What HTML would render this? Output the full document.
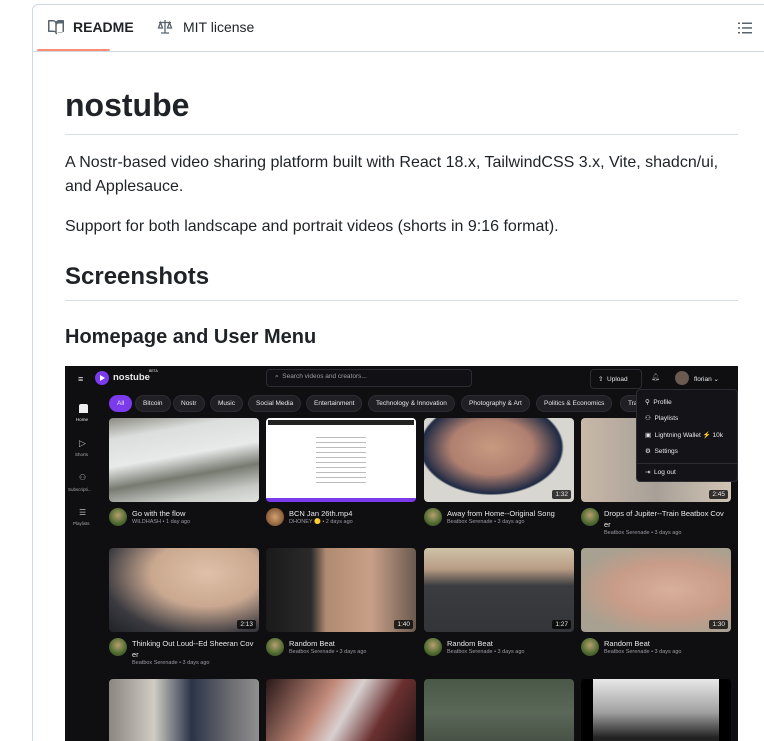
<!DOCTYPE html>
<html style="width:764px;height:741px;overflow:hidden"><head><meta charset="utf-8"><style>
*{margin:0;padding:0;box-sizing:border-box}
body{width:764px;height:741px;overflow:hidden;background:#fff;font-family:"Liberation Sans",sans-serif;color:#1f2328;position:relative}
.a{position:absolute}
.box{left:32px;top:4px;width:740px;height:742px;border:1px solid #d1d9e0;border-radius:6px}
.t{white-space:nowrap}
.ss{left:65px;top:366px;width:673px;height:375px;background:#0f0f12;overflow:hidden}
.ss *{color:#e8e8ea}
.pill{position:absolute;top:29px;height:17px;border-radius:9px;background:#1f1f24;border:1px solid #2c2c33;font-size:6.5px;line-height:15px;padding:0 7px;white-space:nowrap}
.th{position:absolute;width:150px;height:84px;border-radius:4px;overflow:hidden}
.av{position:absolute;width:18px;height:18px;border-radius:50%;background:radial-gradient(circle at 50% 40%,#b8a070,#4d6a30 60%,#2a3a20)}
.ti{position:absolute;font-size:7.5px;white-space:nowrap}
.me{position:absolute;font-size:5.5px;color:#9a9aa2 !important;white-space:nowrap}
.du{position:absolute;right:3px;bottom:3px;background:rgba(0,0,0,.75);font-size:6.5px;padding:1px 3px;border-radius:2px}
.mi{position:absolute;left:8px;font-size:6.5px;white-space:nowrap}
</style></head><body>
<div class="a box"></div>
<svg class="a" style="left:48px;top:19px" width="16" height="16" viewBox="0 0 16 16"><path fill="#59636e" d="M0 1.75A.75.75 0 0 1 .75 1h4.25c1.2 0 2.3.6 3 1.5.7-.9 1.8-1.5 3-1.5h4.25a.75.75 0 0 1 .75.75v10.5a.75.75 0 0 1-.75.75h-4.5c-.9 0-1.7.7-1.7 1.6 0 .4-.3.65-.75.65s-.75-.25-.75-.65c0-.9-.8-1.6-1.7-1.6H.75A.75.75 0 0 1 0 12.250Zm7.25 2.5c0-1-.8-1.750-1.75-1.75H1.5v9h3.75c.75 0 1.450.2 2 .6Zm1.5 9.850c.55-.4 1.250-.6 2-.6h3.750v-9H10.5c-1 0-1.75.8-1.75 1.75Z"/></svg>
<div class="a t" style="left:73px;top:19px;font-size:14px;font-weight:bold">README</div>
<div class="a" style="left:37px;top:49px;width:73px;height:2px;background:#fd8c73;border-radius:1px"></div>
<svg class="a" style="left:157px;top:19px" width="16" height="16" viewBox="0 0 16 16"><path fill="none" stroke="#59636e" stroke-width="1.3" d="M8 1v13M4 14h8M2 3.5h12M3.5 3.5 1.5 9h4zM12.5 3.5 10.5 9h4z"/></svg>
<div class="a t" style="left:183px;top:19px;font-size:14px;color:#1f2328">MIT license</div>
<svg class="a" style="left:737px;top:20px" width="16" height="16" viewBox="0 0 16 16"><g fill="#59636e"><rect x="1" y="2.5" width="2" height="1.5"/><rect x="1" y="7.2" width="2" height="1.5"/><rect x="1" y="12" width="2" height="1.5"/><rect x="5" y="2.5" width="10" height="1.5"/><rect x="5" y="7.2" width="10" height="1.5"/><rect x="5" y="12" width="10" height="1.5"/></g></svg>
<div class="a" style="left:33px;top:51px;width:731px;height:1px;background:#d1d9e0"></div>
<div class="a t" style="left:65px;top:85px;font-size:32px;font-weight:bold;line-height:40px">nostube</div>
<div class="a" style="left:65px;top:134px;width:673px;height:1px;background:#d8dee4"></div>
<div class="a" style="left:65px;top:151px;width:680px;font-size:16px;line-height:24px">A Nostr-based video sharing platform built with React 18.x, TailwindCSS 3.x, Vite, shadcn/ui, and Applesauce.</div>
<div class="a t" style="left:65px;top:215px;font-size:16px;line-height:24px">Support for both landscape and portrait videos (shorts in 9:16 format).</div>
<div class="a t" style="left:65px;top:262px;font-size:24px;font-weight:bold;line-height:30px">Screenshots</div>
<div class="a" style="left:65px;top:300px;width:673px;height:1px;background:#d8dee4"></div>
<div class="a t" style="left:65px;top:325px;font-size:20px;font-weight:bold;line-height:25px">Homepage and User Menu</div>
<div class="a ss">
 <div class="a" style="left:13px;top:8px;font-size:9px">≡</div>
 <div class="a" style="left:30px;top:5px;width:14px;height:14px;border-radius:50%;background:#7c3aed"></div>
 <div class="a" style="left:35px;top:9px;width:0;height:0;border-left:5px solid #fff;border-top:3px solid transparent;border-bottom:3px solid transparent"></div>
 <div class="a t" style="left:48px;top:6px;font-size:9.5px;font-weight:bold">nostube</div>
 <div class="a t" style="left:84px;top:3px;font-size:3.5px">BETA</div>
 <div class="a" style="left:201px;top:3px;width:206px;height:18px;border:1px solid #2c2c33;border-radius:4px;background:#111115"></div>
 <div class="a t" style="left:210px;top:7px;font-size:6.5px;color:#9a9aa2 !important">⌕ &nbsp;Search videos and creators...</div>
 <div class="a" style="left:525px;top:3px;width:52px;height:20px;border:1px solid #2c2c33;border-radius:4px"></div>
 <div class="a t" style="left:533px;top:9px;font-size:6.5px">⇧ &nbsp;Upload</div>
 <div class="a t" style="left:586px;top:7px;font-size:7px;color:#999 !important">🔔︎</div>
 <div class="a" style="left:610px;top:5px;width:14px;height:14px;border-radius:50%;background:#6a5a50"></div>
 <div class="a t" style="left:629px;top:9px;font-size:6.5px">florian ⌄</div>
 <div class="pill" style="left:44px;background:#7c3aed;border-color:#7c3aed">All</div>
 <div class="pill" style="left:70px">Bitcoin</div>
 <div class="pill" style="left:108px">Nostr</div>
 <div class="pill" style="left:145px">Music</div>
 <div class="pill" style="left:183px">Social Media</div>
 <div class="pill" style="left:241px">Entertainment</div>
 <div class="pill" style="left:303px">Technology &amp; Innovation</div>
 <div class="pill" style="left:396px">Photography &amp; Art</div>
 <div class="pill" style="left:471px">Politics &amp; Economics</div>
 <div class="pill" style="left:555px">Tra</div>
 <div class="a" style="left:14px;top:38px;width:9px;height:9px;background:#eee;border-radius:2px 2px 0 0"></div>
 <div class="a t" style="left:11px;top:51px;font-size:4.5px">Home</div>
 <div class="a t" style="left:14px;top:72px;font-size:9px;color:#bbb !important">▷</div>
 <div class="a t" style="left:10px;top:86px;font-size:4.5px;color:#aaa !important">Shorts</div>
 <div class="a t" style="left:14px;top:107px;font-size:8px;color:#bbb !important">⚇</div>
 <div class="a t" style="left:3px;top:121px;font-size:4.5px;color:#aaa !important">Subscripti...</div>
 <div class="a t" style="left:14px;top:142px;font-size:8px;color:#bbb !important">☰</div>
 <div class="a t" style="left:8px;top:155px;font-size:4.5px;color:#aaa !important">Playlists</div>
 <div class="th" style="left:44px;top:52px;background:linear-gradient(170deg,#8a8a80 0%,#dcdedd 20%,#e8eaea 45%,#777a70 65%,#c8cac6 85%,#e0e2e0 100%)"></div>
 <div class="th" style="left:201px;top:52px;background:#fff;border-bottom:4px solid #7c3aed"><div style="margin:2px;height:5px;background:#222"></div><div style="margin:8px 50px;height:50px;background:repeating-linear-gradient(#fff 0 4px,#bbb 4px 5px)"></div></div>
 <div class="th" style="left:359px;top:52px;background:radial-gradient(ellipse at 45% 35%,#c89a80 0%,#b08070 35%,#1e2a44 60%,#d8d6d0 62%)"><div class="du">1:32</div></div>
 <div class="th" style="left:516px;top:52px;background:linear-gradient(90deg,#c8b8a8,#a8a098 50%,#d0c4b4)"><div class="du">2:45</div></div>
 <div class="av" style="left:44px;top:142px"></div><div class="ti" style="left:67px;top:143px">Go with the flow</div><div class="me" style="left:67px;top:153px">WILDHASH • 1 day ago</div>
 <div class="av" style="left:201px;top:142px;background:radial-gradient(#d0a070,#6a4020)"></div><div class="ti" style="left:224px;top:143px">BCN Jan 26th.mp4</div><div class="me" style="left:224px;top:153px">DHONEY 🟡 • 2 days ago</div>
 <div class="av" style="left:359px;top:142px"></div><div class="ti" style="left:382px;top:143px">Away from Home--Original Song</div><div class="me" style="left:382px;top:153px">Beatbox Serenade • 3 days ago</div>
 <div class="av" style="left:516px;top:142px"></div><div class="ti" style="left:539px;top:143px">Drops of Jupiter--Train Beatbox Cov</div><div class="ti" style="left:539px;top:154px">er</div><div class="me" style="left:539px;top:164px">Beatbox Serenade • 3 days ago</div>
 <div class="th" style="left:44px;top:182px;background:radial-gradient(ellipse at 65% 30%,#e0c0a8 0%,#caa890 40%,#3a3a40 75%,#202028)"><div class="du">2:13</div></div>
 <div class="th" style="left:201px;top:182px;background:linear-gradient(90deg,#1a1a1a 0%,#2a2a2a 30%,#b08a70 40%,#c8a088 70%,#6a5a50 100%)"><div class="du">1:40</div></div>
 <div class="th" style="left:359px;top:182px;background:linear-gradient(180deg,#cfc3a8 0%,#b89c84 25%,#3a3c40 45%,#333538 100%)"><div class="du">1:27</div></div>
 <div class="th" style="left:516px;top:182px;background:radial-gradient(ellipse at 60% 50%,#d8b09c 0%,#c89c88 45%,#a8a090 80%)"><div class="du">1:30</div></div>
 <div class="av" style="left:44px;top:272px"></div><div class="ti" style="left:67px;top:273px">Thinking Out Loud--Ed Sheeran Cov</div><div class="ti" style="left:67px;top:284px">er</div><div class="me" style="left:67px;top:294px">Beatbox Serenade • 3 days ago</div>
 <div class="av" style="left:201px;top:272px"></div><div class="ti" style="left:224px;top:273px">Random Beat</div><div class="me" style="left:224px;top:283px">Beatbox Serenade • 3 days ago</div>
 <div class="av" style="left:359px;top:272px"></div><div class="ti" style="left:382px;top:273px">Random Beat</div><div class="me" style="left:382px;top:283px">Beatbox Serenade • 3 days ago</div>
 <div class="av" style="left:516px;top:272px"></div><div class="ti" style="left:539px;top:273px">Random Beat</div><div class="me" style="left:539px;top:283px">Beatbox Serenade • 3 days ago</div>
 <div class="th" style="left:44px;top:313px;background:linear-gradient(90deg,#8a8680,#d0ccc4 30%,#2a3448 55%,#6a6a70 80%,#909090)"></div>
 <div class="th" style="left:201px;top:313px;background:linear-gradient(120deg,#2a1818,#c08878 35%,#d8d0d0 50%,#6a3030 70%,#1a1010)"></div>
 <div class="th" style="left:359px;top:313px;background:linear-gradient(180deg,#4a5848,#5a6858 40%,#3a4038 100%)"></div>
 <div class="th" style="left:516px;top:313px;background:#000"><div style="margin:0 12px;height:84px;background:linear-gradient(180deg,#e8e8e8,#a0a0a0 40%,#222 70%)"></div></div>
 <div class="a" style="left:571px;top:23px;width:102px;height:93px;background:#141418;border:1px solid #2c2c33;border-radius:4px">
  <div class="mi" style="top:8px">⚲ &nbsp;Profile</div>
  <div class="mi" style="top:24px">⚇ &nbsp;Playlists</div>
  <div class="mi" style="top:41px">▣ &nbsp;Lightning Wallet <span style="color:#e0a020 !important">⚡</span> 10k</div>
  <div class="mi" style="top:57px">⚙ &nbsp;Settings</div>
  <div style="position:absolute;left:0;top:73px;width:100%;height:1px;background:#2c2c33"></div>
  <div class="mi" style="top:78px">⇥ &nbsp;Log out</div>
 </div>
</div>
</body></html>
